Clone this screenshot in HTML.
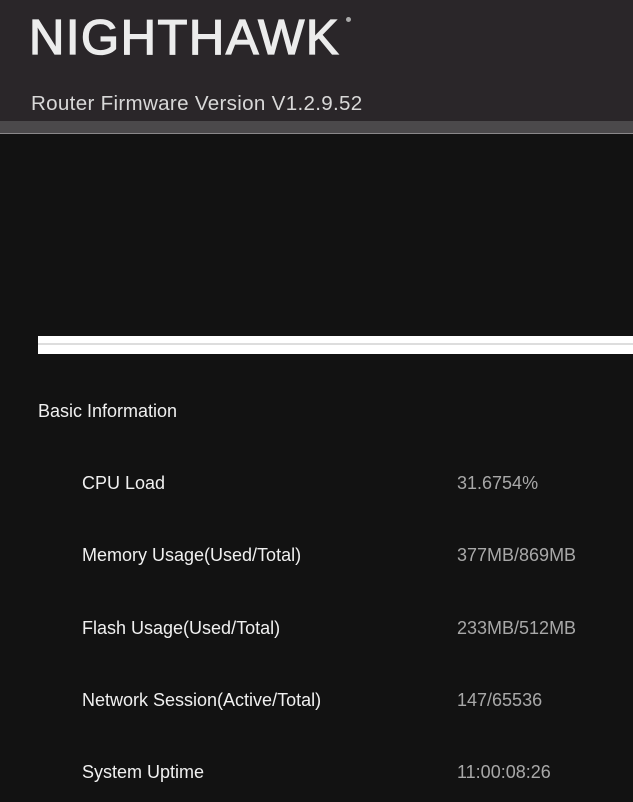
<!DOCTYPE html>
<html><head><style>
body{margin:0;width:633px;height:802px;background:#121212;overflow:hidden;font-family:"Liberation Sans",sans-serif;position:relative}
.hdr{position:absolute;left:0;top:0;width:633px;height:121px;background:#2a2629}
.band{position:absolute;left:0;top:121px;width:633px;height:12px;background:#4b494b}
.line{position:absolute;left:0;top:133px;width:633px;height:1px;background:#8a888a}
.logo{position:absolute;left:29px;top:10px;font-size:49px;color:#ececec;letter-spacing:1.5px;font-weight:normal;-webkit-text-stroke:1.3px #ececec}
.reg{position:absolute;left:346px;top:17px;width:5px;height:5px;border-radius:50%;background:#aaa}
.fw{position:absolute;left:31px;top:92px;font-size:20.6px;color:#d8d8d8;letter-spacing:0.3px}
.bar{position:absolute;left:38px;top:336px;width:595px;height:18px;background:#fff}
.bar i{position:absolute;left:0;top:7px;width:100%;height:2px;background:#ddd}
.t{position:absolute;font-size:18px;color:#f0f0f0}
.v{position:absolute;left:457px;font-size:18px;color:#a8a8a8}
</style></head><body>
<div class="hdr"></div><div class="band"></div><div class="line"></div>
<div class="logo">NIGHTHAWK</div><div class="reg"></div>
<div class="fw">Router Firmware Version V1.2.9.52</div>
<div class="bar"><i></i></div>
<div class="t" style="left:38px;top:401px">Basic Information</div>
<div class="t" style="left:82px;top:473px">CPU Load</div><div class="v" style="top:473px">31.6754%</div>
<div class="t" style="left:82px;top:545px">Memory Usage(Used/Total)</div><div class="v" style="top:545px">377MB/869MB</div>
<div class="t" style="left:82px;top:618px">Flash Usage(Used/Total)</div><div class="v" style="top:618px">233MB/512MB</div>
<div class="t" style="left:82px;top:690px">Network Session(Active/Total)</div><div class="v" style="top:690px">147/65536</div>
<div class="t" style="left:82px;top:762px">System Uptime</div><div class="v" style="top:762px">11:00:08:26</div>
</body></html>
